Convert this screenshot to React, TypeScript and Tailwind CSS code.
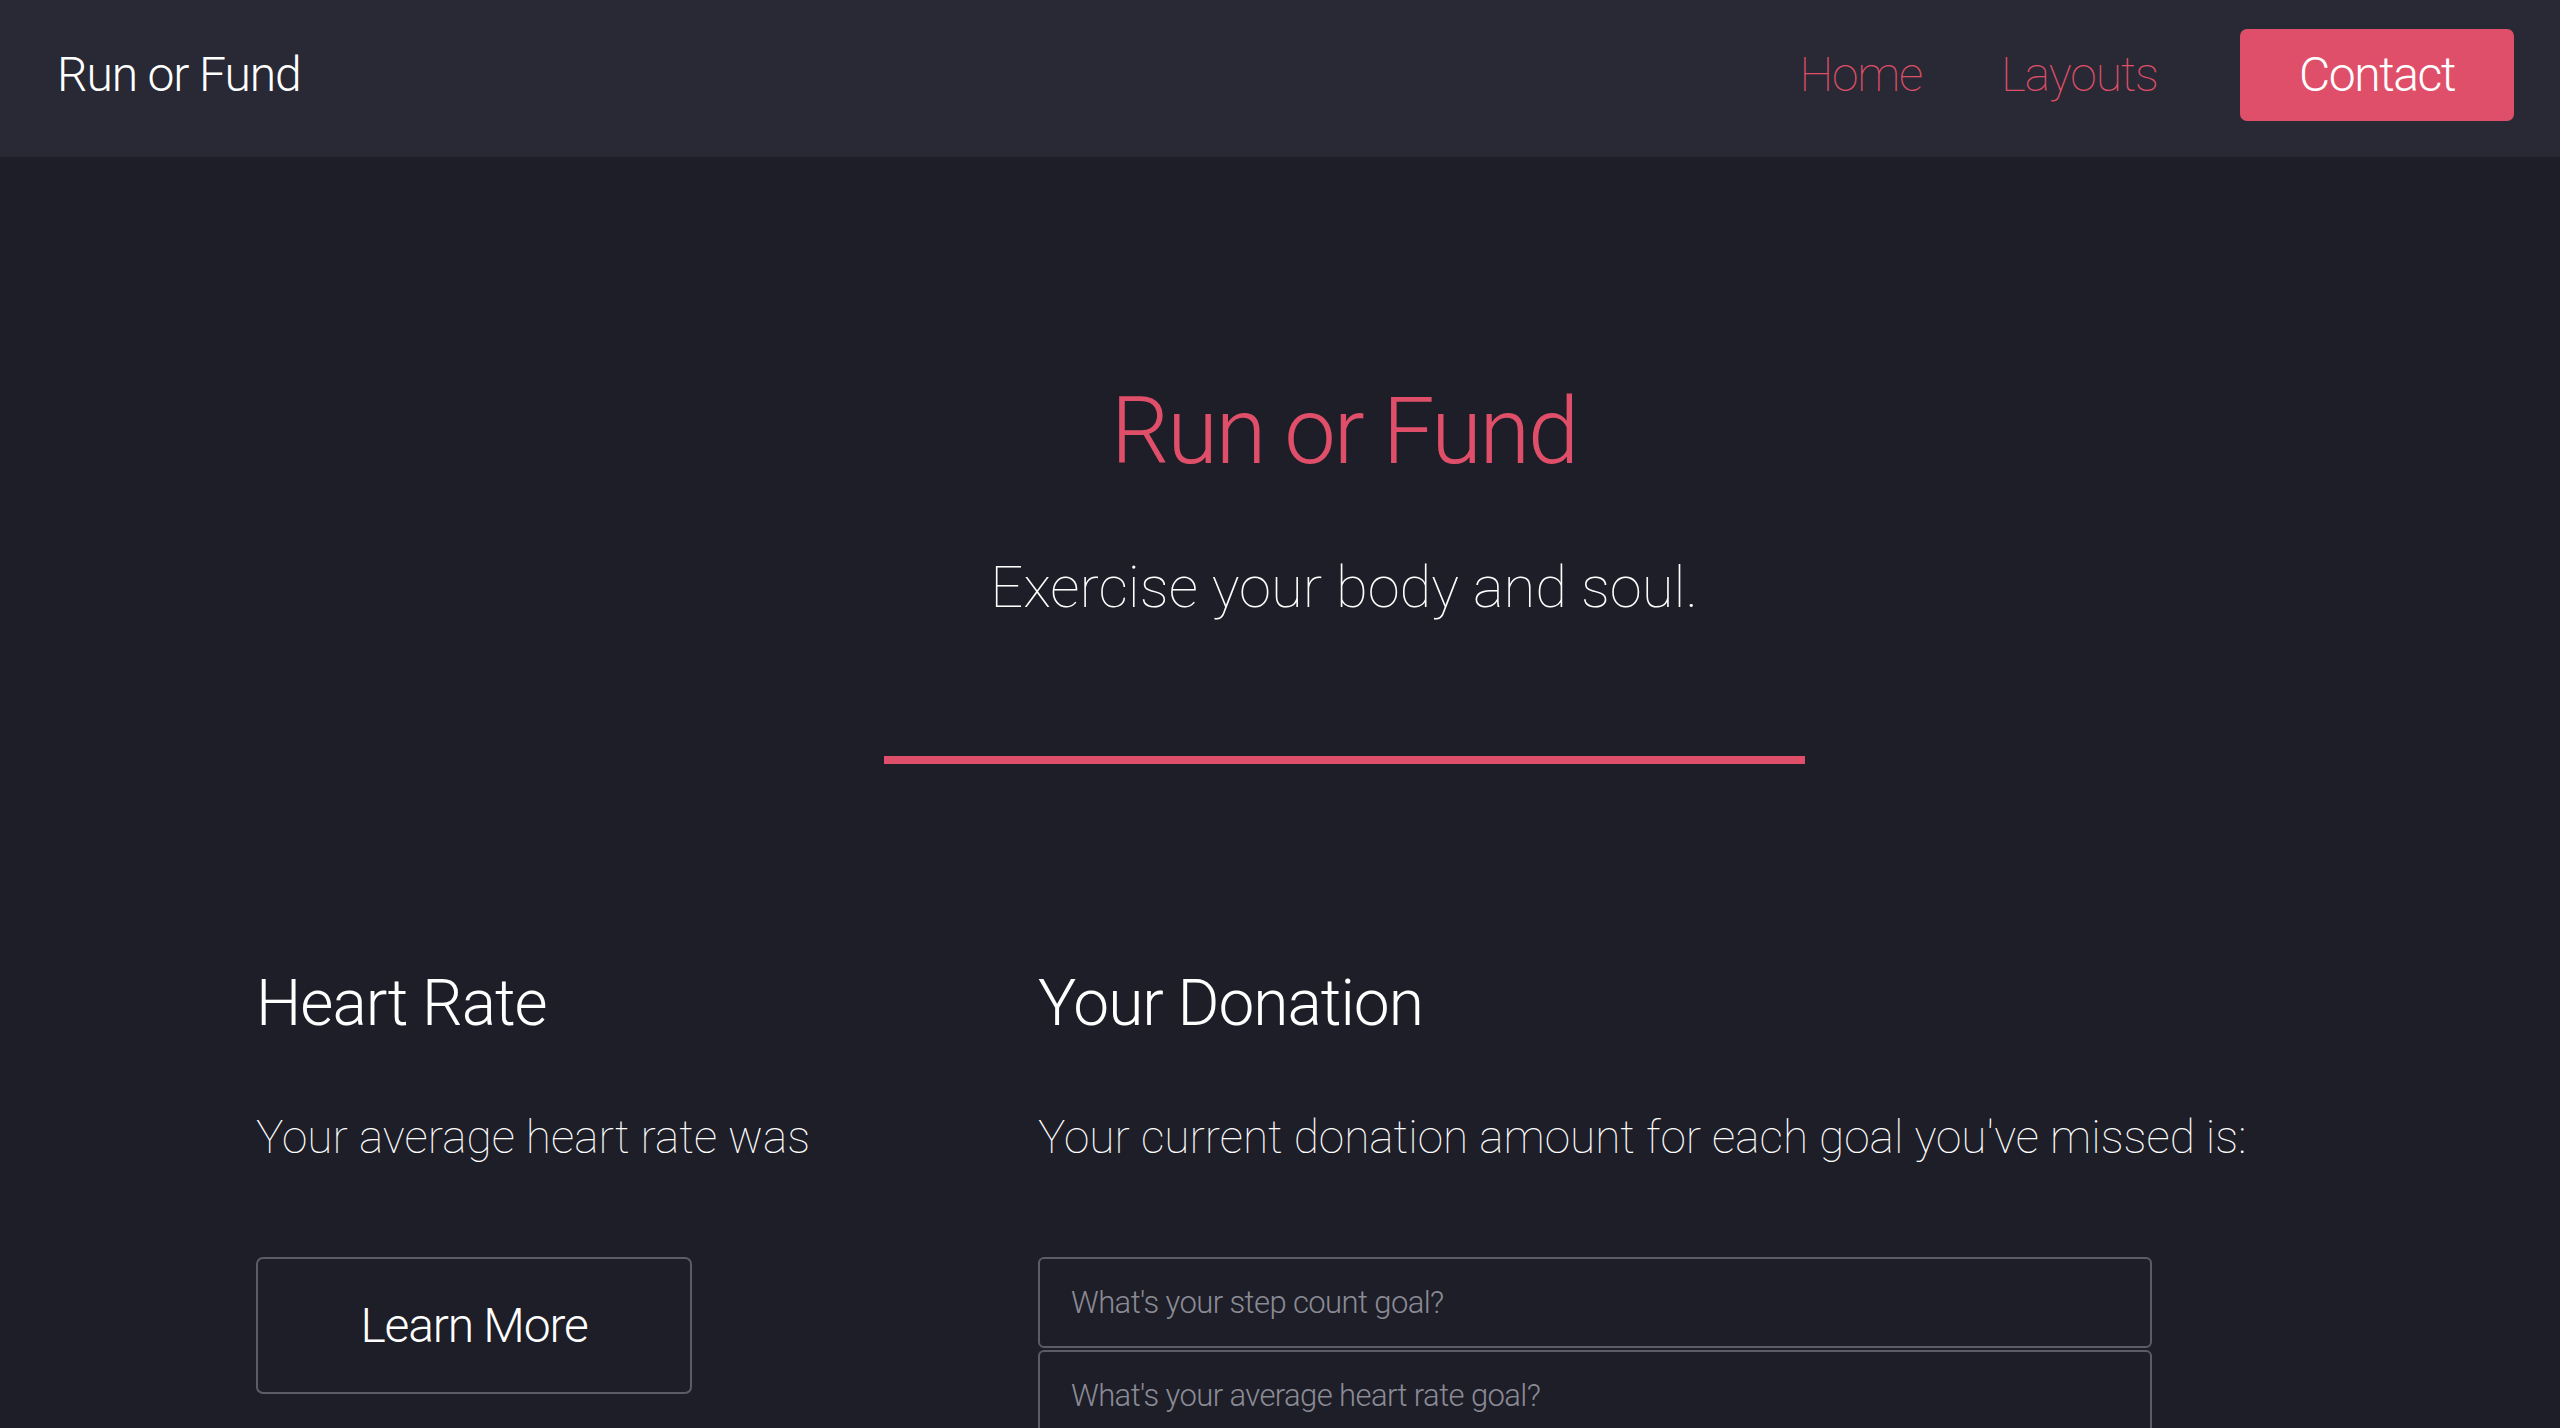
const pink = 'text-[#e04f69]'

function Header() {
  return (
    <header className="h-[157px] bg-[#282934] flex items-center justify-between pl-[57px] pr-[46px] pb-[7px]">
      <a className="text-[48px] leading-none font-light tracking-[-1.1px] text-white">Run or Fund</a>
      <nav className="flex items-center">
        <a className={`text-[48px] leading-none font-thin tracking-[-1.25px] ${pink}`}>Home</a>
        <a className={`ml-[79px] text-[48px] leading-none font-thin tracking-[-1px] ${pink}`}>Layouts</a>
        <button className="ml-[82px] w-[274px] h-[92px] rounded-[7px] bg-[#e04f69] text-white text-[48px] leading-none font-light tracking-[-1.4px]">
          Contact
        </button>
      </nav>
    </header>
  )
}

function Hero() {
  return (
    <section className="pl-[128px] pt-[229px] flex flex-col items-center">
      <h1 className={`text-[92px] leading-none font-light tracking-[-2.2px] ${pink}`}>Run or Fund</h1>
      <p className="mt-[80px] text-[58px] leading-none font-thin text-white">Exercise your body and soul.</p>
      <div className="mt-[140px] w-[921px] h-[8px] bg-[#e04f69]" />
    </section>
  )
}

const field =
  'w-full h-[91px] rounded-[6px] border-2 border-[#5c5c66] bg-transparent px-[31px] text-[31px] font-light tracking-[-0.6px] text-white placeholder:text-[#8b8b95] outline-none'

function Stats() {
  return (
    <section className="pl-[256px] pt-[208px] pb-[120px] flex">
      <div className="w-[782px] flex flex-col items-start">
        <h2 className="text-[64px] leading-none font-light tracking-[-1px] text-white">Heart Rate</h2>
        <p className="mt-[78px] text-[46px] leading-none font-thin text-white whitespace-nowrap">Your average heart rate was</p>
        <button className="mt-[97px] w-[436px] h-[137px] rounded-[7px] border-2 border-[#5c5c66] text-white text-[48px] leading-none font-light tracking-[-1.2px]">
          Learn More
        </button>
      </div>
      <div className="w-[1114px] flex flex-col">
        <h2 className="text-[64px] leading-none font-light tracking-[-1px] text-white">Your Donation</h2>
        <p className="mt-[78px] text-[46px] leading-none font-thin text-white whitespace-nowrap">
          Your current donation amount for each goal you've missed is:
        </p>
        <form className="mt-[97px] flex flex-col gap-[2px]">
          <input placeholder="What's your step count goal?" className={field} />
          <input placeholder="What's your average heart rate goal?" className={field} />
        </form>
      </div>
    </section>
  )
}

export default function App() {
  return (
    <div className="min-h-screen bg-[#1e1e28] font-['Roboto',sans-serif]">
      <Header />
      <Hero />
      <Stats />
    </div>
  )
}
